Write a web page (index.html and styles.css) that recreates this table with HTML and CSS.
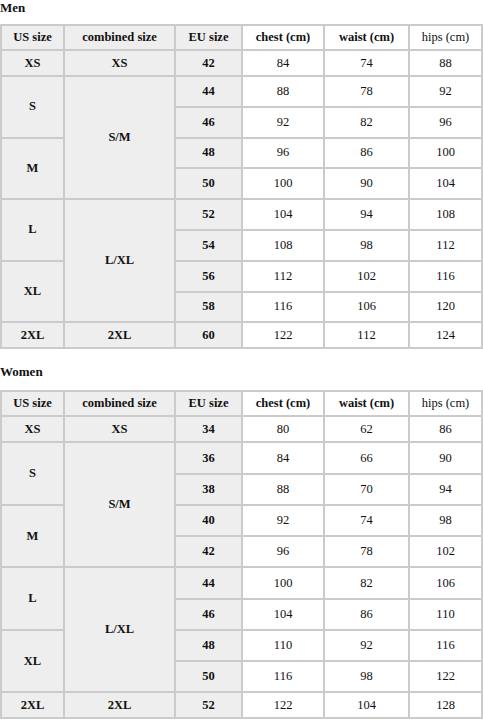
FILE: index.html
```html
<!DOCTYPE html>
<html>
<head>
<meta charset="utf-8">
<link rel="stylesheet" href="styles.css">
</head>
<body>
<h3 class="title first">Men</h3>
<table class="sizes men">
  <colgroup>
    <col class="c1"><col class="c2"><col class="c3"><col class="c4"><col class="c5"><col class="c6">
  </colgroup>
  <tr class="head">
    <th class="g">US size</th><th class="g">combined size</th><th class="g">EU size</th><th>chest (cm)</th><th>waist (cm)</th><td>hips (cm)</td>
  </tr>
  <tr class="single">
    <th class="g">XS</th><th class="g">XS</th><th class="g">42</th><td>84</td><td>74</td><td>88</td>
  </tr>
  <tr class="grp">
    <th class="g" rowspan="2">S</th><th class="g" rowspan="4">S/M</th><th class="g">44</th><td>88</td><td>78</td><td>92</td>
  </tr>
  <tr class="grp">
    <th class="g">46</th><td>92</td><td>82</td><td>96</td>
  </tr>
  <tr class="grp">
    <th class="g" rowspan="2">M</th><th class="g">48</th><td>96</td><td>86</td><td>100</td>
  </tr>
  <tr class="grp">
    <th class="g">50</th><td>100</td><td>90</td><td>104</td>
  </tr>
  <tr class="grp">
    <th class="g" rowspan="2">L</th><th class="g" rowspan="4">L/XL</th><th class="g">52</th><td>104</td><td>94</td><td>108</td>
  </tr>
  <tr class="grp">
    <th class="g">54</th><td>108</td><td>98</td><td>112</td>
  </tr>
  <tr class="grp">
    <th class="g" rowspan="2">XL</th><th class="g">56</th><td>112</td><td>102</td><td>116</td>
  </tr>
  <tr class="grp">
    <th class="g">58</th><td>116</td><td>106</td><td>120</td>
  </tr>
  <tr class="single">
    <th class="g">2XL</th><th class="g">2XL</th><th class="g">60</th><td>122</td><td>112</td><td>124</td>
  </tr>
</table>

<h3 class="title">Women</h3>
<table class="sizes women">
  <colgroup>
    <col class="c1"><col class="c2"><col class="c3"><col class="c4"><col class="c5"><col class="c6">
  </colgroup>
  <tr class="head">
    <th class="g">US size</th><th class="g">combined size</th><th class="g">EU size</th><th>chest (cm)</th><th>waist (cm)</th><td>hips (cm)</td>
  </tr>
  <tr class="single">
    <th class="g">XS</th><th class="g">XS</th><th class="g">34</th><td>80</td><td>62</td><td>86</td>
  </tr>
  <tr class="grp">
    <th class="g" rowspan="2">S</th><th class="g" rowspan="4">S/M</th><th class="g">36</th><td>84</td><td>66</td><td>90</td>
  </tr>
  <tr class="grp">
    <th class="g">38</th><td>88</td><td>70</td><td>94</td>
  </tr>
  <tr class="grp">
    <th class="g" rowspan="2">M</th><th class="g">40</th><td>92</td><td>74</td><td>98</td>
  </tr>
  <tr class="grp">
    <th class="g">42</th><td>96</td><td>78</td><td>102</td>
  </tr>
  <tr class="grp">
    <th class="g" rowspan="2">L</th><th class="g" rowspan="4">L/XL</th><th class="g">44</th><td>100</td><td>82</td><td>106</td>
  </tr>
  <tr class="grp">
    <th class="g">46</th><td>104</td><td>86</td><td>110</td>
  </tr>
  <tr class="grp">
    <th class="g" rowspan="2">XL</th><th class="g">48</th><td>110</td><td>92</td><td>116</td>
  </tr>
  <tr class="grp">
    <th class="g">50</th><td>116</td><td>98</td><td>122</td>
  </tr>
  <tr class="single">
    <th class="g">2XL</th><th class="g">2XL</th><th class="g">52</th><td>122</td><td>104</td><td>128</td>
  </tr>
</table>
</body>
</html>
```

FILE: styles.css
```css
html, body {
  margin: 0;
  padding: 0;
  background: #ffffff;
}

body {
  font-family: "Liberation Serif", "Times New Roman", serif;
  color: #111111;
}

.title {
  font-family: "Liberation Serif", "Times New Roman", serif;
  font-size: 13px;
  font-weight: bold;
  line-height: 15px;
  margin: 15px 0 11px 0;
}

.title.first {
  margin-top: 0;
  margin-bottom: 9px;
}

.sizes {
  border-collapse: collapse;
  table-layout: fixed;
  width: 481px;
  font-family: "Liberation Serif", "Times New Roman", serif;
  font-size: 12.5px;
}

.c1 { width: 63px; }
.c2 { width: 111px; }
.c3 { width: 67px; }
.c4 { width: 82px; }
.c5 { width: 85px; }
.c6 { width: 73px; }

.sizes th,
.sizes td {
  font-family: "Liberation Serif", "Times New Roman", serif;
  font-size: 12.5px;
  color: #111111;
  border: 2px solid #cbcbcb;
  padding: 0;
  text-align: center;
  vertical-align: middle;
  line-height: 15px;
}

.sizes th {
  font-weight: bold;
}

.sizes td {
  font-weight: normal;
}

.sizes .g {
  background: #eeeeee;
}

.head { height: 25px; }
.single { height: 26px; }
.men .grp { height: 30.8px; }
.women .grp { height: 31.25px; }
```
